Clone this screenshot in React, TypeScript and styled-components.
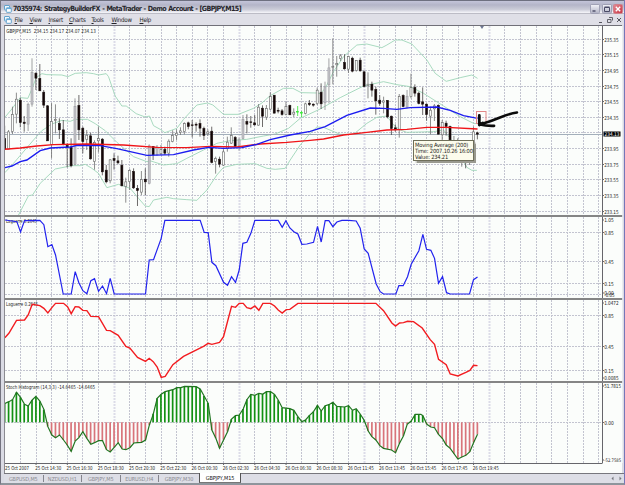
import React from "react";
import styled, { createGlobalStyle } from "styled-components";

const FONT = '"DejaVu Sans Condensed", "DejaVu Sans", sans-serif';

const Global = createGlobalStyle`
  body { margin: 0; overflow: hidden; background: #d9d9e2; }
  * { box-sizing: border-box; }
`;

const Window = styled.div`
  width: 625px;
  height: 485px;
  display: flex;
  flex-direction: column;
  background: #dadbe4;
  border-left: 1px solid #73737f;
  border-right: 1px solid #7676b8;
  border-bottom: 2px solid #8e959c;
  font-family: ${FONT};
  overflow: hidden;
`;

const TitleBar = styled.header`
  height: 14px;
  flex: none;
  display: flex;
  align-items: center;
  padding: 2px 1px 0 3px;
  border-top: 1px solid #6e7080;
  background: linear-gradient(#c4c5da 0, #b4b5c8 30%, #cbccd8 65%, #f3f3f8 90%, #9a9aa6 100%);
`;

const Title = styled.h1`
  margin: 0 0 0 1px;
  flex: 1;
  font-size: 7.1px;
  line-height: 10px;
  font-weight: 700;
  letter-spacing: -0.61px;
  word-spacing: 0.6px;
  color: #26262c;
  white-space: pre;
`;

const Controls = styled.div`
  display: flex;
  gap: 1.5px;
`;

const ControlButton = styled.span<{ $close?: boolean }>`
  width: 10px;
  height: 10px;
  display: flex;
  border-radius: 1.5px;
  border: 1px solid ${(p) => (p.$close ? "#d0808a" : "#a0a1b5")};
  background: ${(p) => (p.$close ? "linear-gradient(135deg,#e48791,#c73846)" : "linear-gradient(#f0f0f6,#b4b5c7)")};
`;

const MenuBar = styled.nav`
  height: 11px;
  flex: none;
  display: flex;
  align-items: center;
  padding: 0 1px 0 3px;
  background: #dfdfe7;
`;

const MenuGap = styled.span`
  width: 2.5px;
  flex: none;
`;

const MenuItem = styled.span<{ $w: number }>`
  width: ${(p) => p.$w}px;
  flex: none;
  font-size: 6.2px;
  line-height: 10px;
  letter-spacing: -0.28px;
  color: #24242a;
  white-space: nowrap;
`;

const Spacer = styled.div`
  flex: 1;
`;

const Workspace = styled.main`
  height: 448px;
  flex: none;
  margin-left: 3px;
  margin-right: 2px;
  display: flex;
  flex-direction: column;
  position: relative;
  background: #fbfdfb;
  border-top: 1px solid #707078;
  border-left: 1px solid #8a8a90;
`;

const Pane = styled.svg<{ $h: number }>`
  display: block;
  flex: none;
  width: 618px;
  height: ${(p) => p.$h}px;
`;

const Splitter = styled.div`
  height: 2px;
  flex: none;
  background: #858585;
`;

const Tooltip = styled.div`
  position: absolute;
  left: 408px;
  top: 114px;
  width: 61px;
  height: 21px;
  padding: 0.5px 0 0 1px;
  border: 1px solid #6f6f5a;
  background: #fcfcec;
  box-shadow: 1.5px 1.5px 1px #99998f;
  font-size: 5.7px;
  line-height: 6.2px;
  letter-spacing: -0.17px;
  color: #24241c;
  white-space: nowrap;
`;

const Annotation = styled.svg`
  position: absolute;
  left: 466px;
  top: 79px;
  width: 60px;
  height: 30px;
`;

const TabBar = styled.footer`
  height: 10px;
  flex: none;
  display: flex;
  margin-left: 3px;
  background: #dddee6;
`;

const Tab = styled.span<{ $w: number; $active?: boolean }>`
  width: ${(p) => p.$w}px;
  flex: none;
  display: flex;
  align-items: center;
  justify-content: center;
  font-size: 5.5px;
  line-height: 8px;
  letter-spacing: -0.12px;
  white-space: nowrap;
  color: ${(p) => (p.$active ? "#111" : "#8b8b91")};
  background: ${(p) => (p.$active ? "#fff" : "transparent")};
  border-right: ${(p) => (p.$active ? "1px solid #555" : "0")};
  border-left: ${(p) => (p.$active ? "1px solid #555" : "0")};
  border-bottom: ${(p) => (p.$active ? "1px solid #777" : "0")};
  border-top: ${(p) => (p.$active ? "0" : "1px solid #77777d")};
`;

const TabRule = styled.i`
  width: 1px;
  flex: none;
  border-top: 1px solid #77777d;
  background: linear-gradient(#dddee6 10%, #85858d 10% 85%, #dddee6 85%);
`;

const TabRest = styled.div`
  flex: 1;
  display: flex;
  justify-content: flex-end;
  border-top: 1px solid #77777d;
`;

// Candles: high, body top, body bottom, low, kind (b bearish, w bullish, g tall bullish, n doji)
type Kind = "b" | "w" | "g" | "n";
type Candle = [number, number, number, number, Kind];
const candles: Candle[] = [
  [272,310,343,343,"b"],[285,290,343,343,"w"],[215,238,290,297,"w"],[173,192,238,265,"w"],[188,195,263,277,"b"],
  [243,261,266,290,"b"],[203,208,268,288,"g"],[70,112,208,215,"g"],[112,114,130,165,"b"],[87,130,168,168,"b"],
  [165,171,211,219,"b"],[210,212,318,318,"b"],[204,259,329,370,"w"],[208,253,257,295,"w"],[250,265,285,312,"b"],
  [255,284,328,331,"b"],[325,331,337,397,"b"],[310,336,393,397,"b"],[190,214,389,391,"g"],[180,211,285,315,"b"],
  [275,279,320,355,"b"],[285,300,314,345,"w"],[293,302,372,374,"b"],[316,322,380,404,"w"],[275,310,318,352,"w"],
  [309,312,411,421,"b"],[390,405,441,445,"b"],[372,374,438,445,"w"],[355,370,377,404,"b"],[362,377,384,388,"b"],
  [375,390,453,454,"b"],[428,440,455,503,"w"],[402,406,440,465,"w"],[400,409,459,462,"b"],[450,460,467,513,"b"],
  [408,433,472,480,"w"],[400,432,441,480,"b"],[328,332,446,448,"g"],[333,334,360,375,"b"],[330,335,360,362,"g"],
  [330,343,357,360,"w"],[335,343,355,360,"b"],[313,318,355,365,"w"],[286,301,320,322,"w"],[283,294,302,315,"w"],
  [277,287,293,300,"w"],[262,265,290,298,"w"],[260,263,275,283,"b"],[255,269,271,307,"b"],[262,267,271,290,"b"],
  [253,265,280,305,"b"],[275,280,302,315,"b"],[283,290,297,303,"w"],[275,288,383,385,"b"],[365,370,380,416,"w"],
  [365,372,388,397,"b"],[343,350,391,393,"w"],[305,321,341,350,"w"],[277,301,325,327,"w"],[303,307,335,335,"b"],
  [308,314,333,347,"g"],[240,253,311,313,"g"],[238,259,268,295,"b"],[243,260,263,278,"b"],[240,263,270,272,"b"],
  [207,216,271,272,"w"],[211,219,244,276,"b"],[210,220,247,255,"w"],[172,184,223,225,"w"],[180,180,235,235,"b"],
  [218,226,229,235,"b"],[222,227,239,242,"b"],[200,214,239,241,"w"],[209,211,240,240,"b"],[220,231,238,246,"w"],
  [213,229,231,243,"n"],[228,232,234,246,"n"],[203,206,236,238,"w"],[195,204,209,213,"b"],[205,207,211,215,"b"],
  [158,165,206,210,"w"],[145,171,207,222,"b"],[140,155,204,225,"g"],[70,98,150,205,"g"],[10,94,98,148,"w"],
  [63,85,90,125,"w"],[57,62,71,78,"w"],[58,82,102,104,"b"],[62,64,103,114,"w"],[65,69,109,112,"b"],
  [75,76,107,110,"w"],[68,75,108,110,"b"],[106,110,155,157,"b"],[112,147,152,190,"w"],[140,147,166,185,"b"],
  [155,163,198,239,"b"],[180,195,206,212,"b"],[185,197,202,235,"w"],[195,196,246,250,"b"],[242,243,281,300,"b"],
  [268,278,285,290,"b"],[177,184,283,308,"w"],[178,181,215,217,"b"],[165,183,217,220,"g"],[116,157,185,190,"w"],
  [148,157,175,185,"b"],[170,174,206,208,"b"],[157,200,208,240,"b"],[205,207,239,257,"b"],[215,225,244,298,"w"],
  [207,212,222,258,"w"],[208,211,298,298,"b"],[255,262,300,317,"w"],[257,264,275,302,"b"],[272,274,315,370,"b"],
  [303,330,350,370,"w"],[310,330,350,372,"b"],[330,340,360,395,"w"],[330,340,360,400,"b"],[320,340,360,390,"w"],
  [275,290,355,380,"w"],[290,293,298,313,"b"],
];

// Curves are stored in thirds of a pixel, relative to the top of their plotting origin
type Curve = number[];
const upperBand: Curve = [14,247,35,222,60,188,83,190,96,160,108,128,125,116,140,119,185,120,203,125,225,115,258,113,280,116,295,120,318,116,325,125,345,183,365,213,378,213,408,236,435,246,448,243,460,272,480,283,494,293,530,280,550,253,590,210,622,204,638,210,670,238,715,238,760,220,785,204,810,182,850,160,878,160,903,173,950,174,960,176,975,160,1000,110,1030,65,1070,30,1100,27,1145,38,1160,30,1185,15,1205,15,1235,27,1280,75,1305,115,1338,139,1380,128,1415,120,1432,130];
const middleBand: Curve = [14,413,40,385,100,315,125,287,155,267,185,256,210,259,225,253,262,253,285,266,315,287,350,322,400,365,440,380,452,378,490,390,530,386,560,370,610,345,650,325,690,317,740,313,790,303,825,297,865,280,900,250,960,222,1020,188,1090,153,1150,140,1190,149,1230,155,1270,175,1330,213,1380,245,1420,265,1432,266];
const lowerBand: Curve = [55,540,85,482,97,480,120,445,165,402,215,392,240,392,255,388,275,400,295,415,320,458,355,448,390,460,415,490,435,513,447,515,460,495,485,490,500,487,520,491,560,494,590,496,620,465,650,420,670,397,710,388,765,386,800,400,825,403,855,400,870,375,900,330,930,295,950,276,970,277,1020,298,1060,298,1100,265,1130,247,1160,243,1180,270,1200,285,1220,292,1300,290,1330,285,1350,310,1385,370,1400,397,1415,406,1430,406];
const slowAverage: Curve = [14,343,60,339,110,333,160,329,260,327,370,330,470,337,560,338,630,334,710,336,780,327,860,322,930,316,970,312,1030,300,1100,292,1160,285,1220,283,1280,277,1340,277,1432,282];
const fastAverage: Curve = [14,398,35,393,60,380,80,375,120,347,150,339,210,336,230,331,300,332,350,341,440,361,520,359,580,345,625,337,670,340,725,338,770,328,810,314,870,300,930,289,975,275,1040,241,1110,219,1150,220,1190,223,1230,218,1310,216,1350,226,1390,242,1432,250];
const laguerreFast: Curve = [14,30,50,35,61,66,73,32,119,31,131,44,143,110,155,104,166,135,189,252,213,252,225,185,236,218,248,242,260,251,272,212,283,206,295,244,307,228,319,251,330,205,342,252,436,252,447,150,460,149,483,85,494,31,600,31,612,67,624,68,635,157,647,167,670,217,682,226,694,200,706,217,717,180,728,100,740,97,752,70,764,31,834,31,846,52,857,32,869,54,881,65,893,72,905,103,920,102,940,97,952,49,963,96,975,32,986,32,998,50,1010,36,1025,31,1045,31,1068,33,1080,55,1092,117,1104,130,1128,222,1140,245,1150,252,1187,252,1196,227,1209,227,1222,200,1233,163,1256,122,1268,73,1279,118,1292,121,1303,145,1315,220,1327,200,1339,248,1350,252,1408,252,1420,209,1432,201];
const laguerreSlow: Curve = [14,128,26,115,49,76,73,75,84,60,96,28,119,32,131,40,143,54,155,38,166,25,190,25,202,35,213,56,225,35,236,36,248,46,260,47,272,64,295,65,319,106,330,107,354,121,377,154,389,159,412,187,436,199,447,190,459,200,471,216,483,247,495,244,518,209,550,184,610,154,624,145,635,148,658,142,670,125,694,34,706,37,717,25,729,25,740,38,752,41,764,33,776,46,788,25,811,25,823,33,834,45,846,54,858,44,869,43,893,25,1127,25,1150,47,1175,84,1186,93,1198,84,1210,83,1222,79,1240,80,1266,99,1290,134,1303,148,1315,193,1338,209,1350,237,1373,243,1397,232,1409,226,1420,211,1432,212];
const stochastic: Curve = [14,325,26,320,37,314,49,292,61,307,73,328,84,333,96,315,107,304,119,318,131,343,143,395,155,420,166,428,178,420,190,435,201,450,213,469,225,438,236,428,248,410,260,430,272,448,283,443,295,437,307,437,319,464,330,471,342,457,354,443,366,462,377,464,389,458,401,444,412,443,424,442,436,435,447,392,459,358,471,310,483,298,495,290,518,284,530,278,542,278,553,274,588,275,600,282,624,325,635,405,647,430,658,460,670,435,682,410,694,372,706,362,717,360,729,342,740,314,752,298,764,301,776,295,788,297,799,290,811,290,823,298,834,315,846,338,869,341,881,346,893,365,905,380,916,375,928,361,940,350,952,331,963,348,975,332,986,329,998,322,1010,334,1033,336,1045,332,1057,346,1068,341,1080,357,1092,376,1104,408,1115,425,1127,435,1139,452,1150,460,1174,465,1186,473,1198,445,1210,422,1221,388,1233,378,1245,358,1262,358,1268,362,1280,388,1292,396,1303,398,1315,418,1327,431,1338,450,1350,460,1373,492,1385,486,1397,481,1409,470,1420,443,1432,418];

const points = (c: Curve, top: number) => {
  const out: string[] = [];
  for (let i = 0; i < c.length; i += 2) out.push(`${(c[i] / 3 + 0.2).toFixed(2)},${(c[i + 1] / 3 + top).toFixed(2)}`);
  return out.join(" ");
};

const valueAt = (c: Curve, x: number) => {
  for (let i = 2; i < c.length; i += 2) {
    if (x <= c[i]) {
      const t = (x - c[i - 2]) / (c[i] - c[i - 2]);
      return c[i - 1] + Math.max(0, t) * (c[i + 1] - c[i - 1]);
    }
  }
  return c[c.length - 1];
};

const barX = (i: number) => 14 + 11.72 * i;
const columns = Array.from({ length: 38 }, (_, k) => Math.floor(20.4 + 15.63 * k) + 0.5).filter((x) => x < 602);
const AXIS = 602.5;

const Grid = ({ top, bottom, rows }: { top: number; bottom: number; rows: number[] }) => (
  <g stroke="#c3c4d0" strokeDasharray="2 1">
    {columns.map((x, k) => (
      <line key={x} x1={x} x2={x} y1={top} y2={bottom} stroke={k % 8 === 6 ? "#dcdce8" : undefined} strokeWidth={k % 8 === 6 ? 2 : 1} />
    ))}
    {rows.map((y) => (
      <line key={y} x1={5} x2={AXIS} y1={y} y2={y} />
    ))}
  </g>
);

const Scale = ({ top, bottom, marks }: { top: number; bottom: number; marks: [number, string][] }) => (
  <g fontFamily={FONT} fill="#222">
    <rect x={AXIS} y={top} width={20} height={bottom - top} fill="#fbfdfb" />
    <line x1={AXIS} x2={AXIS} y1={top} y2={bottom} stroke="#66666b" />
    {marks.map(([y, label]) => (
      <g key={label}>
        <line x1={AXIS} x2={AXIS + 1.5} y1={y} y2={y} stroke="#66666b" />
        <text x={604.2} y={y + 2} fontSize={label.length > 7 ? 4.8 : 5.4} textLength={Math.min(17, label.length * 2.4)} lengthAdjust="spacingAndGlyphs">{label}</text>
      </g>
    ))}
  </g>
);

const Caption = ({ x, y, w, children }: { x: number; y: number; w: number; children: string }) => (
  <text x={x} y={y} textLength={w} lengthAdjust="spacingAndGlyphs" fontFamily={FONT} fontSize={5.4} fill="#1c1c1c" xmlSpace="preserve">{children}</text>
);

const CandleMark = ({ i, c }: { i: number; c: Candle }) => {
  const [h, t, b, l, kind] = c;
  const x = barX(i) / 3;
  const y = (v: number) => v / 3 + 35;
  const paint = {
    b: { fill: "#120606", stroke: "#1c1010", wick: "#4a4646" },
    w: { fill: "#fbfdfb", stroke: "#666", wick: "#707070" },
    g: { fill: "#c6c6cb", stroke: "#9b9ba0", wick: "#8a8a8e" },
    n: { fill: "#35e835", stroke: "#35e835", wick: "#35e835" },
  }[kind];
  return (
    <g>
      <line x1={x} x2={x} y1={y(h)} y2={y(l)} stroke={paint.wick} strokeWidth={0.8} />
      <rect x={x - 1} y={y(t) + 0.2} width={2} height={Math.max(0.6, y(b) - y(t) - 0.4)} fill={paint.fill} stroke={paint.stroke} strokeWidth={0.6} />
    </g>
  );
};

const priceRows = [39.5, 54.5, 70.5, 86.5, 101.5, 117.5, 132.5, 148.5, 164.5, 179.5, 195.5, 211.5];
const prices = ["235.35", "235.15", "234.95", "234.75", "234.55", "234.35", "", "233.95", "233.75", "233.55", "233.35", "233.15"];
const priceMarks = priceRows.map((y, i) => [y, prices[i]] as [number, string]).filter((m) => m[1]);

const PricePane = () => (
  <Pane $h={189} viewBox="5 26 618 189">
    <Grid top={26} bottom={215} rows={priceRows} />
    <g fill="none" stroke="#9fd6b9" strokeWidth={0.9}>
      <polyline points={points(upperBand, 35)} />
      <polyline points={points(middleBand, 35)} />
      <polyline points={points(lowerBand, 35)} />
    </g>
    <line x1={5} x2={AXIS} y1={134.5} y2={134.5} stroke="#a3afba" />
    {candles.map((c, i) => <CandleMark key={i} i={i} c={c} />)}
    <polyline points={points(slowAverage, 35)} fill="none" stroke="#f01418" strokeWidth={1.4} />
    <polyline points={points(fastAverage, 35)} fill="none" stroke="#1c1cf0" strokeWidth={1.4} />
    <path d="M480 26h4l-2 3z" fill="#6f7894" />
    <Caption x={6.3} y={32.5} w={89.5}>GBPJPY,M15  234.15 234.17 234.07 234.13</Caption>
    <Scale top={26} bottom={215} marks={priceMarks} />
    <rect x={603.5} y={131.5} width={17} height={5} fill="#000" />
    <text x={604.5} y={136} fontSize={5.2} textLength={15} lengthAdjust="spacingAndGlyphs" fontFamily={FONT} fill="#fff">234.13</text>
  </Pane>
);

const LaguerreFastPane = () => (
  <Pane $h={81} viewBox="5 217 618 81">
    <Grid top={217} bottom={298} rows={[232.5, 261.5, 283.5, 294.5]} />
    <Caption x={6} y={223} w={31}>Laguerre 0.2645</Caption>
    <polyline points={points(laguerreFast, 210)} fill="none" stroke="#2222ee" strokeWidth={1.2} />
    <Scale top={217} bottom={298} marks={[[220, "1.05"], [232.5, "0.85"], [261.5, "0.45"], [283.5, "0.15"], [293, "0.00"]]} />
    <Caption x={604.2} y={297} w={10.5}>-0.05</Caption>
  </Pane>
);

const LaguerreSlowPane = () => (
  <Pane $h={81} viewBox="5 300 618 81">
    <Grid top={300} bottom={381} rows={[315.5, 346.5, 370.5]} />
    <Caption x={6} y={306} w={32}>Laguerre 0.2645</Caption>
    <polyline points={points(laguerreSlow, 295)} fill="none" stroke="#f21c20" strokeWidth={1.4} />
    <Scale top={300} bottom={381} marks={[[303, "1.0472"], [315.5, "0.85"], [346.5, "0.45"], [370.5, "0.15"], [378, "0.0085"]]} />
  </Pane>
);

const timeLabels = ["25 Oct 2007", "25 Oct 14:30", "25 Oct 16:30", "25 Oct 18:30", "25 Oct 20:30", "25 Oct 22:30", "26 Oct 00:30", "26 Oct 02:30", "26 Oct 04:30", "26 Oct 06:30", "26 Oct 08:30", "26 Oct 11:45", "26 Oct 13:45", "26 Oct 15:45", "26 Oct 17:45", "26 Oct 19:45"];

const HistogramPane = () => (
  <Pane $h={90} viewBox="5 383 618 90">
    <Grid top={383} bottom={463} rows={[422.5]} />
    {candles.map((_, i) => {
      const v = valueAt(stochastic, barX(i));
      const up = v < 382;
      return <line key={i} x1={barX(i) / 3} x2={barX(i) / 3} y1={422.3} y2={v / 3 + 295} stroke={up ? "#129012" : "#d8747a"} strokeWidth={1.7} />;
    })}
    <polyline points={points(stochastic, 295)} fill="none" stroke="#217521" strokeWidth={1.2} />
    <Caption x={6} y={389} w={89}>Stoch Histogram (14,3,3) -14.6465 -14.6465</Caption>
    <Scale top={383} bottom={463} marks={[[386, "51.7815"], [422.5, "0.00"], [460, "-52.7585"]]} />
    <line x1={5} x2={AXIS} y1={463.5} y2={463.5} stroke="#66666b" />
    {timeLabels.map((t, i) => (
      <g key={t}>
        {i > 0 && <line x1={4.8 + 31.25 * i} x2={4.8 + 31.25 * i} y1={463} y2={465} stroke="#66666b" />}
        <Caption x={i === 0 ? 5 : 4 + 31.25 * i} y={469.8} w={i === 0 ? 24 : 26}>{t}</Caption>
      </g>
    ))}
  </Pane>
);

const AppIcon = () => (
  <svg width="8" height="8" viewBox="0 0 8 8">
    <rect x=".5" y=".5" width="5" height="4.5" rx=".5" fill="#eef8ff" stroke="#63a3cd" />
    <rect x="2.3" y="2.8" width="5" height="4.5" rx=".5" fill="#fff" stroke="#63a3cd" />
    <path d="M2.5 3.6h4.5" stroke="#5ba6da" />
  </svg>
);

const menu: [string, number][] = [["File", 15], ["View", 19], ["Insert", 20.5], ["Charts", 22.5], ["Tools", 20], ["Window", 28], ["Help", 16]];
const tabs: [string, number][] = [["GBPUSD,M5", 38.5], ["NZDUSD,H1", 37.5], ["GBPJPY,M5", 37.5], ["EURUSD,H4", 37.5], ["GBPJPY,M30", 40]];

export default function App() {
  return (
    <>
      <Global />
      <Window>
        <TitleBar>
          <AppIcon />
          <Title>7035974: StrategyBuilderFX - MetaTrader - Demo Account - [GBPJPY,M15]</Title>
          <Controls>
            <ControlButton><svg width="8" height="8"><path d="M1.5 6h3" stroke="#4a4b66" strokeWidth="1.4" /></svg></ControlButton>
            <ControlButton><svg width="8" height="8"><path d="M1.5 2.5h5v4h-5z M1.5 2h5" fill="none" stroke="#4a4b66" /></svg></ControlButton>
            <ControlButton $close><svg width="8" height="8"><path d="M1.8 1.8l4.4 4.4M6.2 1.8l-4.4 4.4" stroke="#fff" strokeWidth="1.4" /></svg></ControlButton>
          </Controls>
        </TitleBar>
        <MenuBar>
          <AppIcon />
          <MenuGap />
          {menu.map(([label, w]) => <MenuItem key={label} $w={w}><u>{label[0]}</u>{label.slice(1)}</MenuItem>)}
          <Spacer />
          <svg width="26" height="10" viewBox="0 0 26 10" fill="none" stroke="#55565e">
            <path d="M2 7.5h3" />
            <path d="M12 2.5h3.5v3M10.5 4.5h3.5v3h-3.5z" strokeWidth=".9" />
            <path d="M20 3l4 4M24 3l-4 4" />
          </svg>
        </MenuBar>
        <Workspace>
          <PricePane />
          <Splitter />
          <LaguerreFastPane />
          <Splitter />
          <LaguerreSlowPane />
          <Splitter />
          <HistogramPane />
          <Tooltip>
            Moving Average (200)<br />Time: 2007.10.26 16:00<br />Value: 234.21
          </Tooltip>
          <Annotation viewBox="471 105 60 30">
            <rect x="476.5" y="111.5" width="9.5" height="12" fill="none" stroke="#e28888" strokeWidth="1" />
            <path d="M517 112.5c-7 1-12 3-17 5c-7 3-13 5-20 7" fill="none" stroke="#0b0b0b" strokeWidth="2.5" strokeLinecap="round" />
            <path d="M479.3 115.5v9.5l3.5-2M480 124.5c4 1 8 1.5 14 1.3" fill="none" stroke="#0b0b0b" strokeWidth="2.8" strokeLinecap="round" strokeLinejoin="round" />
          </Annotation>
        </Workspace>
        <TabBar>
          {tabs.map(([label, w]) => (
            <React.Fragment key={label}>
              <Tab $w={w}>{label}</Tab>
              {label !== "GBPJPY,M30" && <TabRule />}
            </React.Fragment>
          ))}
          <Tab $w={42} $active>GBPJPY,M15</Tab>
          <TabRest>
            <svg width="16" height="9" viewBox="0 0 16 9" fill="#77787f"><path d="M5.5 2.5v4l-2-2zM11.5 2.5v4l2-2z" /></svg>
          </TabRest>
        </TabBar>
      </Window>
    </>
  );
}
